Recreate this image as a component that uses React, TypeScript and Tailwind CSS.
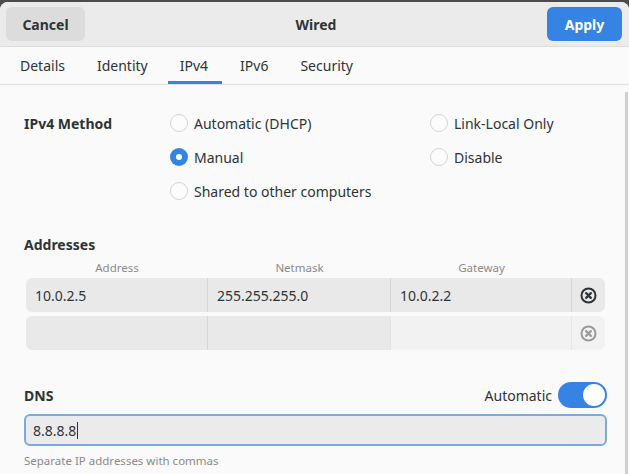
import React from "react";

const font = { fontFamily: '"Noto Sans", "Open Sans", sans-serif' };

function Radio({ checked, label }: { checked?: boolean; label: string }) {
  return (
    <div className="flex items-center h-[34px]">
      {checked ? (
        <span className="w-[18px] h-[18px] rounded-full bg-[#3584e4] flex items-center justify-center">
          <span className="w-[6px] h-[6px] rounded-full bg-white" />
        </span>
      ) : (
        <span className="w-[18px] h-[18px] rounded-full border border-[#d4d4d4] bg-[#fcfcfc]" />
      )}
      <span className="ml-[6px] text-[14px] text-[#2e3436]">{label}</span>
    </div>
  );
}

function DelIcon({ color }: { color: string }) {
  return (
    <svg width="17" height="17" viewBox="0 0 16 16">
      <circle cx="8" cy="8" r="6.6" fill="none" stroke={color} strokeWidth="1.9" />
      <path d="M5.8 5.8 L10.2 10.2 M10.2 5.8 L5.8 10.2" stroke={color} strokeWidth="2.1" strokeLinecap="round" />
    </svg>
  );
}

export default function App() {
  return (
    <div style={font} className="w-[629px] h-[474px] overflow-hidden bg-[#4b4b4b] pt-[2px] relative">
      <div className="h-[472px] bg-[#fafafa] rounded-t-[8px] overflow-hidden flex flex-col">
        {/* Header */}
        <div className="h-[45px] bg-[#ebebeb] border-b border-[#dcdcdc] flex items-center justify-between pl-[6px] pr-[7px] shrink-0">
          <button className="w-[79px] h-[34px] rounded-[6px] bg-[#dcdcdc] text-[14px] font-bold text-[#2e3436]">
            Cancel
          </button>
          <div className="text-[14px] font-bold text-[#2e3436]">Wired</div>
          <button className="w-[75px] h-[34px] rounded-[6px] bg-[#3584e4] text-[14px] font-bold text-white">
            Apply
          </button>
        </div>
        {/* Tabs */}
        <div className="h-[38px] border-b border-[#dedede] flex items-stretch pl-[4px] shrink-0">
          {["Details", "Identity", "IPv4", "IPv6", "Security"].map((t) => (
            <div key={t} className="relative px-[16px] flex items-center text-[14px] text-[#2e3436]">
              {t}
              {t === "IPv4" && (
                <span className="absolute left-[4px] right-[2px] bottom-0 h-[3px] bg-[#3584e4]" />
              )}
            </div>
          ))}
        </div>
        {/* Content */}
        <div className="flex-1 pl-[24px] pr-[22px] pt-[21px]">
          <div className="grid grid-cols-[146px_260px_1fr]">
            <div className="h-[34px] flex items-center text-[14px] font-bold text-[#2e3436]">IPv4 Method</div>
            <div className="flex flex-col">
              <Radio label="Automatic (DHCP)" />
              <Radio checked label="Manual" />
              <Radio label="Shared to other computers" />
            </div>
            <div className="flex flex-col">
              <Radio label="Link-Local Only" />
              <Radio label="Disable" />
            </div>
          </div>

          <div className="mt-[27px] text-[14px] font-bold text-[#2e3436] h-[20px] leading-[20px]">Addresses</div>
          <div className="ml-[2px] mr-[2px]">
            <div className="grid grid-cols-[182px_183px_181px_33px] h-[18px] items-center text-[11.5px] text-[#8a8a8a] mt-[4px]">
              <div className="text-center">Address</div>
              <div className="text-center">Netmask</div>
              <div className="text-center">Gateway</div>
              <div />
            </div>
            <div className="grid grid-cols-[182px_183px_181px_33px] h-[34px] mt-[1px] rounded-[6px] overflow-hidden bg-[#e9e9e9] text-[14px] text-[#2e3436]">
              <div className="flex items-center px-[9px] border-r border-[#d6d6d6]">10.0.2.5</div>
              <div className="flex items-center px-[9px] border-r border-[#d6d6d6]">255.255.255.0</div>
              <div className="flex items-center px-[9px] border-r border-[#d6d6d6]">10.0.2.2</div>
              <div className="flex items-center justify-center">
                <DelIcon color="#2e3436" />
              </div>
            </div>
            <div className="grid grid-cols-[182px_183px_181px_33px] h-[34px] mt-[4px] rounded-[6px] overflow-hidden text-[14px]">
              <div className="bg-[#e9e9e9] border-r border-[#d6d6d6]" />
              <div className="bg-[#e9e9e9] border-r border-[#e3e3e3]" />
              <div className="bg-[#f2f2f2] border-r border-[#e6e6e6]" />
              <div className="bg-[#f2f2f2] flex items-center justify-center">
                <DelIcon color="#9a9a9a" />
              </div>
            </div>
          </div>

          <div className="mt-[30px] flex items-center justify-between h-[30px]">
            <div className="text-[14px] font-bold text-[#2e3436]">DNS</div>
            <div className="flex items-center">
              <span className="text-[14px] text-[#2e3436] mr-[6px]">Automatic</span>
              <span className="w-[49px] h-[26px] rounded-full bg-[#3584e4] flex items-center justify-end pr-[2px]">
                <span className="w-[22px] h-[22px] rounded-full bg-white" />
              </span>
            </div>
          </div>
          <div className="mt-[4px] h-[32px] rounded-[6px] border-2 border-[#7fa8dc] bg-[#ebebeb] flex items-center pl-[7px] text-[14px] text-[#2e3436]">
            8.8.8.8<span className="inline-block w-px h-[17px] bg-[#2e3436] ml-[1px]" />
          </div>
          <div className="mt-[6px] text-[11.5px] text-[#8a8a8a]">Separate IP addresses with commas</div>
        </div>
      </div>
      <div className="absolute left-[625px] top-[92px] w-[3px] h-[382px] bg-[#cfcfcf]" />
    </div>
  );
}
